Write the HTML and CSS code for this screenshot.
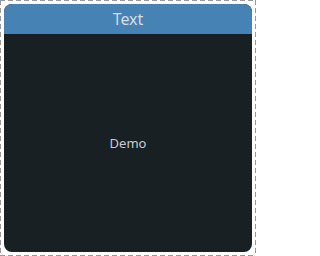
FILE: index.html
```html
<!DOCTYPE html>
<html>
<head>
<meta charset="utf-8">
<link rel="stylesheet" href="styles.css">
</head>
<body>
<div class="frame">
  <div class="card">
    <div class="header">Text</div>
    <div class="content">Demo</div>
  </div>
</div>
</body>
</html>
```
FILE: styles.css
```css
html, body {
  margin: 0;
  padding: 0;
  background: #ffffff;
}
.frame {
  box-sizing: border-box;
  width: 256px;
  height: 256px;
  padding: 4px;
  background:
    repeating-linear-gradient(90deg, #999 0 5px, transparent 5px 8px) top left / 100% 1px no-repeat,
    repeating-linear-gradient(90deg, #999 0 5px, transparent 5px 8px) bottom left / 100% 1px no-repeat,
    repeating-linear-gradient(180deg, #999 0 5px, transparent 5px 8px) top left / 1px 100% no-repeat,
    repeating-linear-gradient(180deg, #999 0 5px, transparent 5px 8px) top right / 1px 100% no-repeat;
}
.card {
  width: 248px;
  height: 248px;
  border-radius: 8px;
  overflow: hidden;
  display: flex;
  flex-direction: column;
  background: #182024;
  font-family: "Noto Sans", sans-serif;
}
.header {
  height: 30px;
  background: #4682b4;
  color: #d8dde2;
  font-size: 16px;
  display: flex;
  align-items: center;
  justify-content: center;
}
.content {
  flex: 1;
  display: flex;
  align-items: center;
  justify-content: center;
  color: #c8ccd0;
  font-size: 13px;
}
```
